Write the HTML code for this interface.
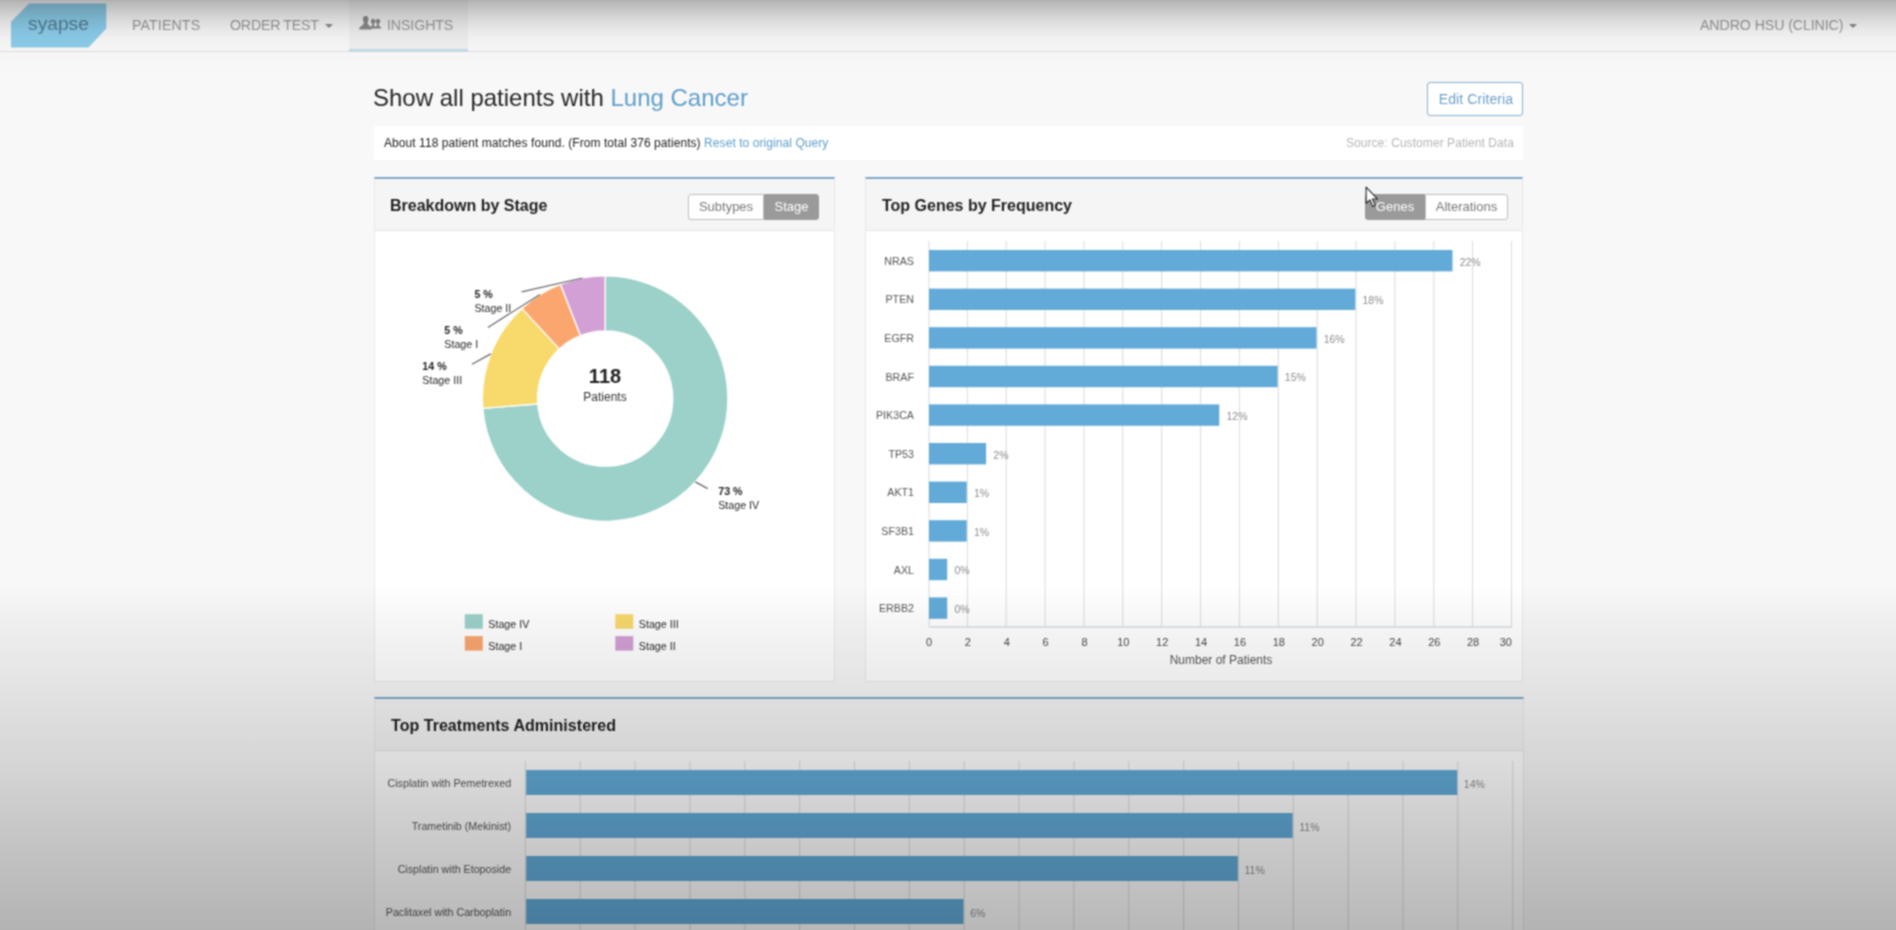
<!DOCTYPE html>
<html lang="en">
<head>
<meta charset="utf-8">
<title>Syapse Insights</title>
<style>
*{box-sizing:border-box;margin:0;padding:0}
html,body{width:1896px;height:930px;overflow:hidden}
body{position:relative;background:#f8f8f8;font-family:"Liberation Sans",Arial,sans-serif;color:#333;-webkit-font-smoothing:antialiased}
.abs{position:absolute}
/* navbar */
#nav{position:absolute;left:0;top:0;width:1896px;height:52px;background:#f8f8f8;border-bottom:1px solid #dedede}
#nav .item{position:absolute;top:0;height:50px;line-height:50px;font-size:14.2px;color:#9a9a9a;white-space:nowrap;letter-spacing:0}
#nav .active{background:#f0f0f0;border-bottom:3px solid #c2dbe6;height:52px}
.caret{display:inline-block;width:0;height:0;border-left:4px solid transparent;border-right:4px solid transparent;border-top:4px solid #8a8a8a;vertical-align:middle;margin-left:6px}
#logo{position:absolute;left:10px;top:3px}
/* heading */
#h1{position:absolute;left:373px;top:82px;font-size:24px;line-height:32px;color:#262626;white-space:nowrap}
#h1 span{color:#5f9ecb}
#edit{position:absolute;left:1427px;top:82px;width:96px;height:34px;border:1px solid #86b0d0;border-radius:3px;background:#fff;color:#6a9fc8;font-size:14px;line-height:32px;text-align:center;letter-spacing:.1px;padding-left:2px}
#info{position:absolute;left:374px;top:126px;width:1149px;height:34px;background:#fff;font-size:12px;letter-spacing:.07px;line-height:34px;color:#222}
#info .l{position:absolute;left:10px;top:0;white-space:nowrap}
#info .l span{color:#5f9ecb}
#info .r{position:absolute;right:9px;top:0;color:#b5b5b5;white-space:nowrap}
/* panels */
.panel{position:absolute;background:#fff;border:1px solid #e9e9e9;border-top:2px solid #7fa8c9}
.panel .hd{position:absolute;left:0;top:0;right:0;height:52px;background:#f5f5f5;border-bottom:1px solid #e6e6e6}
.panel .hd .t{position:absolute;left:15px;top:0;line-height:53px;font-size:16px;font-weight:bold;color:#1f1f1f;white-space:nowrap}
.bg{position:absolute;height:26px;font-size:13px;line-height:24px;text-align:center;border:1px solid #bdbdbd;background:#fff;color:#777}
.bg.on{background:#9a9a9a;border-color:#9a9a9a;color:#fff}
svg text{font-family:"Liberation Sans",Arial,sans-serif}
.cat{font-size:10.7px;fill:#555}
.val{font-size:10.5px;fill:#8c8c8c}
.tick{font-size:11px;fill:#484848}
.axt{font-size:12px;fill:#555}
.dl{font-size:10.7px;fill:#262626}
.dlb{font-size:10.7px;fill:#222;font-weight:bold}
.lg{font-size:10.7px;fill:#262626}
#page{position:absolute;left:0;top:0;width:1896px;height:930px;overflow:hidden;background:#f8f8f8;filter:url(#soft)}
#charts{position:absolute;left:0;top:0;width:1896px;height:930px}
#ovb{position:absolute;left:0;top:560px;width:1896px;height:370px;pointer-events:none;
background:linear-gradient(to bottom,rgba(0,0,0,0) 0,rgba(0,0,0,0) 25px,rgba(0,0,0,.014) 40px,rgba(0,0,0,.034) 60px,rgba(0,0,0,.05) 80px,rgba(0,0,0,.078) 120px,rgba(0,0,0,.109) 160px,rgba(0,0,0,.138) 200px,rgba(0,0,0,.173) 240px,rgba(0,0,0,.206) 280px,rgba(0,0,0,.238) 320px,rgba(0,0,0,.28) 370px)}
#ovt{position:absolute;left:0;top:0;width:1896px;height:80px;pointer-events:none;
background:linear-gradient(to bottom,rgba(0,0,0,.31) 0,rgba(0,0,0,.265) 1.5px,rgba(0,0,0,.195) 10px,rgba(0,0,0,.12) 20px,rgba(0,0,0,.062) 30px,rgba(0,0,0,.028) 40px,rgba(0,0,0,.012) 50px,rgba(0,0,0,.005) 65px,rgba(0,0,0,0) 80px)}
</style>
</head>
<body>
<svg width="0" height="0" style="position:absolute"><defs><filter id="soft" x="0" y="0" width="100%" height="100%" color-interpolation-filters="sRGB"><feConvolveMatrix order="3" kernelMatrix="1 2 1 2 4 2 1 2 1" divisor="16" edgeMode="duplicate"/></filter></defs></svg>
<div id="page">
<div id="nav">
  <svg id="logo" width="98" height="46" viewBox="0 0 98 46"><polygon points="19,0.500 96.300,0.500 96.300,25.500 78.500,44.500 1,44.500 1,18.800" fill="#8ccdea"/><text x="48.500" y="26.800" text-anchor="middle" font-size="19.200" fill="#527d94">syapse</text></svg>
  <div class="item" style="left:132px;letter-spacing:.12px">PATIENTS</div>
  <div class="item" style="left:230px;letter-spacing:-.2px;word-spacing:-.5px">ORDER TEST<span class="caret"></span></div>
  <div class="item active" style="left:349px;width:119px"><span style="position:absolute;left:38px;letter-spacing:-.1px">INSIGHTS</span>
    <svg style="position:absolute;left:10px;top:16px" width="24" height="15" viewBox="0 0 24 15"><g fill="#8a8a8a"><ellipse cx="6.700" cy="2.900" rx="2.800" ry="3"/><path d="M0.200 13.500C0.200 10.500 3.300 9.700 4.700 8L4.700 5L8.700 5L8.700 8C10.100 9.700 12.900 10.500 12.900 13.500Z"/><ellipse cx="14.100" cy="5.300" rx="2.300" ry="2.500"/><path d="M11.200 12.600C11.200 10.900 12.600 10.300 13.200 9.300L13.200 7L15 7L15 9.300C15.600 10.300 17.400 10.900 17.400 12.600Z"/><ellipse cx="18.900" cy="5.300" rx="2.300" ry="2.500"/><path d="M15.800 12.600C15.800 10.900 17.400 10.300 18 9.300L18 7L19.800 7L19.800 9.300C20.400 10.300 22.400 10.900 22.400 12.600Z"/></g></svg>
  </div>
  <div class="item" style="left:1700px;letter-spacing:-.09px">ANDRO HSU (CLINIC)<span class="caret"></span></div>
</div>

<div id="h1">Show all patients with <span>Lung Cancer</span></div>
<div id="edit">Edit Criteria</div>
<div id="info"><div class="l">About 118 patient matches found. (From total 376 patients) <span>Reset to original Query</span></div><div class="r">Source: Customer Patient Data</div></div>

<div class="panel" style="left:374px;top:177px;width:461px;height:505px">
  <div class="hd"><div class="t">Breakdown by Stage</div>
    <div class="bg" style="left:313px;top:15px;width:76px;border-radius:3px 0 0 3px">Subtypes</div>
    <div class="bg on" style="left:389px;top:15px;width:55px;border-radius:0 3px 3px 0">Stage</div>
  </div>
</div>
<div class="panel" style="left:865px;top:177px;width:658px;height:505px">
  <div class="hd"><div class="t" style="left:16px">Top Genes by Frequency</div>
    <div class="bg on" style="left:499px;top:15px;width:60px;border-radius:3px 0 0 3px">Genes</div>
    <div class="bg" style="left:559px;top:15px;width:83px;border-radius:0 3px 3px 0">Alterations</div>
  </div>
</div>
<div class="panel" style="left:374px;top:697px;width:1150px;height:260px">
  <div class="hd"><div class="t" style="left:16px;letter-spacing:.04px">Top Treatments Administered</div></div>
</div>

<svg id="charts" width="1896" height="930" viewBox="0 0 1896 930">
<g id="donut">
<path d="M605.15 275.85A122.75 122.75 0 1 1 482.79 408.39L537.77 403.99A67.6 67.6 0 1 0 605.15 331.00Z" fill="#9bd1c9" stroke="#fff" stroke-width="1.3"/>
<path d="M482.79 408.39A122.75 122.75 0 0 1 521.89 308.41L559.30 348.93A67.6 67.6 0 0 0 537.77 403.99Z" fill="#f8d96c" stroke="#fff" stroke-width="1.3"/>
<path d="M521.89 308.41A122.75 122.75 0 0 1 560.45 284.28L580.53 335.64A67.6 67.6 0 0 0 559.30 348.93Z" fill="#fba66f" stroke="#fff" stroke-width="1.3"/>
<path d="M560.45 284.28A122.75 122.75 0 0 1 605.15 275.85L605.15 331.00A67.6 67.6 0 0 0 580.53 335.64Z" fill="#d3a0d5" stroke="#fff" stroke-width="1.3"/>
<line x1="695.3" y1="481.9" x2="707.7" y2="488.6" stroke="#666" stroke-width="1.2"/>
<text x="718.2" y="494.7" class="dlb">73 %</text>
<text x="718.2" y="508.9" class="dl">Stage IV</text>
<line x1="490.8" y1="353.9" x2="472.0" y2="364.2" stroke="#666" stroke-width="1.2"/>
<text x="422.3" y="369.6" class="dlb">14 %</text>
<text x="422.3" y="383.8" class="dl">Stage III</text>
<line x1="540.0" y1="294.5" x2="487.9" y2="327.4" stroke="#666" stroke-width="1.2"/>
<text x="444.3" y="333.5" class="dlb">5 %</text>
<text x="444.3" y="347.7" class="dl">Stage I</text>
<line x1="582.4" y1="278.0" x2="521.6" y2="291.9" stroke="#666" stroke-width="1.2"/>
<text x="474.4" y="297.9" class="dlb">5 %</text>
<text x="474.4" y="312.1" class="dl">Stage II</text>
<rect x="464.8" y="614.2" width="18" height="14.5" fill="#9bd1c9"/>
<text x="488.3" y="627.6" class="lg">Stage IV</text>
<rect x="615.3" y="614.2" width="18" height="14.5" fill="#f8d96c"/>
<text x="638.8" y="627.6" class="lg">Stage III</text>
<rect x="464.8" y="636.1" width="18" height="14.5" fill="#fba66f"/>
<text x="488.3" y="649.5" class="lg">Stage I</text>
<rect x="615.3" y="636.1" width="18" height="14.5" fill="#d3a0d5"/>
<text x="638.8" y="649.5" class="lg">Stage II</text>
<text x="605" y="383" text-anchor="middle" font-size="20" font-weight="bold" fill="#222">118</text>
<text x="605" y="401" text-anchor="middle" font-size="12" fill="#333">Patients</text>
</g>
<g id="genes">
<line x1="929.0" y1="241.0" x2="929.0" y2="627.0" stroke="#dadada" stroke-width="1"/>
<line x1="967.4" y1="241.0" x2="967.4" y2="627.0" stroke="#dadada" stroke-width="1"/>
<line x1="1006.2" y1="241.0" x2="1006.2" y2="627.0" stroke="#dadada" stroke-width="1"/>
<line x1="1045.1" y1="241.0" x2="1045.1" y2="627.0" stroke="#dadada" stroke-width="1"/>
<line x1="1084.0" y1="241.0" x2="1084.0" y2="627.0" stroke="#dadada" stroke-width="1"/>
<line x1="1122.8" y1="241.0" x2="1122.8" y2="627.0" stroke="#dadada" stroke-width="1"/>
<line x1="1161.7" y1="241.0" x2="1161.7" y2="627.0" stroke="#dadada" stroke-width="1"/>
<line x1="1200.6" y1="241.0" x2="1200.6" y2="627.0" stroke="#dadada" stroke-width="1"/>
<line x1="1239.4" y1="241.0" x2="1239.4" y2="627.0" stroke="#dadada" stroke-width="1"/>
<line x1="1278.3" y1="241.0" x2="1278.3" y2="627.0" stroke="#dadada" stroke-width="1"/>
<line x1="1317.2" y1="241.0" x2="1317.2" y2="627.0" stroke="#dadada" stroke-width="1"/>
<line x1="1356.0" y1="241.0" x2="1356.0" y2="627.0" stroke="#dadada" stroke-width="1"/>
<line x1="1394.9" y1="241.0" x2="1394.9" y2="627.0" stroke="#dadada" stroke-width="1"/>
<line x1="1433.8" y1="241.0" x2="1433.8" y2="627.0" stroke="#dadada" stroke-width="1"/>
<line x1="1472.6" y1="241.0" x2="1472.6" y2="627.0" stroke="#dadada" stroke-width="1"/>
<line x1="1511.5" y1="241.0" x2="1511.5" y2="627.0" stroke="#dadada" stroke-width="1"/>
<line x1="929.0" y1="627.0" x2="1512.0" y2="627.0" stroke="#d5dde6" stroke-width="1.5"/>
<rect x="929.0" y="250.0" width="523.5" height="21.4" fill="#62abd8"/>
<text x="914.0" y="264.8" text-anchor="end" class="cat">NRAS</text>
<text x="1459.7" y="265.5" class="val">22%</text>
<rect x="929.0" y="288.6" width="426.3" height="21.4" fill="#62abd8"/>
<text x="914.0" y="303.4" text-anchor="end" class="cat">PTEN</text>
<text x="1362.5" y="304.1" class="val">18%</text>
<rect x="929.0" y="327.2" width="387.5" height="21.4" fill="#62abd8"/>
<text x="914.0" y="342.0" text-anchor="end" class="cat">EGFR</text>
<text x="1323.7" y="342.7" class="val">16%</text>
<rect x="929.0" y="365.8" width="348.6" height="21.4" fill="#62abd8"/>
<text x="914.0" y="380.6" text-anchor="end" class="cat">BRAF</text>
<text x="1284.8" y="381.3" class="val">15%</text>
<rect x="929.0" y="404.4" width="290.3" height="21.4" fill="#62abd8"/>
<text x="914.0" y="419.2" text-anchor="end" class="cat">PIK3CA</text>
<text x="1226.5" y="419.9" class="val">12%</text>
<rect x="929.0" y="443.0" width="57.1" height="21.4" fill="#62abd8"/>
<text x="914.0" y="457.8" text-anchor="end" class="cat">TP53</text>
<text x="993.3" y="458.5" class="val">2%</text>
<rect x="929.0" y="481.6" width="37.7" height="21.4" fill="#62abd8"/>
<text x="914.0" y="496.4" text-anchor="end" class="cat">AKT1</text>
<text x="973.9" y="497.1" class="val">1%</text>
<rect x="929.0" y="520.2" width="37.7" height="21.4" fill="#62abd8"/>
<text x="914.0" y="535.0" text-anchor="end" class="cat">SF3B1</text>
<text x="973.9" y="535.7" class="val">1%</text>
<rect x="929.0" y="558.8" width="18.2" height="21.4" fill="#62abd8"/>
<text x="914.0" y="573.6" text-anchor="end" class="cat">AXL</text>
<text x="954.4" y="574.3" class="val">0%</text>
<rect x="929.0" y="597.4" width="18.2" height="21.4" fill="#62abd8"/>
<text x="914.0" y="612.2" text-anchor="end" class="cat">ERBB2</text>
<text x="954.4" y="612.9" class="val">0%</text>
<text x="929.0" y="646" text-anchor="middle" class="tick">0</text>
<text x="967.9" y="646" text-anchor="middle" class="tick">2</text>
<text x="1006.7" y="646" text-anchor="middle" class="tick">4</text>
<text x="1045.6" y="646" text-anchor="middle" class="tick">6</text>
<text x="1084.5" y="646" text-anchor="middle" class="tick">8</text>
<text x="1123.3" y="646" text-anchor="middle" class="tick">10</text>
<text x="1162.2" y="646" text-anchor="middle" class="tick">12</text>
<text x="1201.1" y="646" text-anchor="middle" class="tick">14</text>
<text x="1239.9" y="646" text-anchor="middle" class="tick">16</text>
<text x="1278.8" y="646" text-anchor="middle" class="tick">18</text>
<text x="1317.7" y="646" text-anchor="middle" class="tick">20</text>
<text x="1356.5" y="646" text-anchor="middle" class="tick">22</text>
<text x="1395.4" y="646" text-anchor="middle" class="tick">24</text>
<text x="1434.3" y="646" text-anchor="middle" class="tick">26</text>
<text x="1473.1" y="646" text-anchor="middle" class="tick">28</text>
<text x="1512.0" y="646" text-anchor="end" class="tick">30</text>
<text x="1221" y="664" text-anchor="middle" class="axt">Number of Patients</text>
</g>
<g id="treat">
<line x1="525.4" y1="761.0" x2="525.4" y2="930" stroke="#dddddd" stroke-width="1"/>
<line x1="580.2" y1="761.0" x2="580.2" y2="930" stroke="#dddddd" stroke-width="1"/>
<line x1="635.1" y1="761.0" x2="635.1" y2="930" stroke="#dddddd" stroke-width="1"/>
<line x1="690.0" y1="761.0" x2="690.0" y2="930" stroke="#dddddd" stroke-width="1"/>
<line x1="744.8" y1="761.0" x2="744.8" y2="930" stroke="#dddddd" stroke-width="1"/>
<line x1="799.6" y1="761.0" x2="799.6" y2="930" stroke="#dddddd" stroke-width="1"/>
<line x1="854.5" y1="761.0" x2="854.5" y2="930" stroke="#dddddd" stroke-width="1"/>
<line x1="909.3" y1="761.0" x2="909.3" y2="930" stroke="#dddddd" stroke-width="1"/>
<line x1="964.2" y1="761.0" x2="964.2" y2="930" stroke="#dddddd" stroke-width="1"/>
<line x1="1019.0" y1="761.0" x2="1019.0" y2="930" stroke="#dddddd" stroke-width="1"/>
<line x1="1073.9" y1="761.0" x2="1073.9" y2="930" stroke="#dddddd" stroke-width="1"/>
<line x1="1128.8" y1="761.0" x2="1128.8" y2="930" stroke="#dddddd" stroke-width="1"/>
<line x1="1183.6" y1="761.0" x2="1183.6" y2="930" stroke="#dddddd" stroke-width="1"/>
<line x1="1238.5" y1="761.0" x2="1238.5" y2="930" stroke="#dddddd" stroke-width="1"/>
<line x1="1293.3" y1="761.0" x2="1293.3" y2="930" stroke="#dddddd" stroke-width="1"/>
<line x1="1348.2" y1="761.0" x2="1348.2" y2="930" stroke="#dddddd" stroke-width="1"/>
<line x1="1403.0" y1="761.0" x2="1403.0" y2="930" stroke="#dddddd" stroke-width="1"/>
<line x1="1457.8" y1="761.0" x2="1457.8" y2="930" stroke="#dddddd" stroke-width="1"/>
<line x1="1512.7" y1="761.0" x2="1512.7" y2="930" stroke="#dddddd" stroke-width="1"/>
<rect x="526.1999999999999" y="770.0" width="931.0" height="25" fill="#62abd8"/>
<text x="511.09999999999997" y="786.5" text-anchor="end" class="cat">Cisplatin with Pemetrexed</text>
<text x="1463.8" y="787.5" class="val">14%</text>
<rect x="526.1999999999999" y="813.0" width="766.4" height="25" fill="#62abd8"/>
<text x="511.09999999999997" y="829.5" text-anchor="end" class="cat">Trametinib (Mekinist)</text>
<text x="1299.3" y="830.5" class="val">11%</text>
<rect x="526.1999999999999" y="856.0" width="711.6" height="25" fill="#62abd8"/>
<text x="511.09999999999997" y="872.5" text-anchor="end" class="cat">Cisplatin with Etoposide</text>
<text x="1244.5" y="873.5" class="val">11%</text>
<rect x="526.1999999999999" y="899.0" width="437.3" height="25" fill="#62abd8"/>
<text x="511.09999999999997" y="915.5" text-anchor="end" class="cat">Paclitaxel with Carboplatin</text>
<text x="970.2" y="916.5" class="val">6%</text>
</g>
</svg>

<svg class="abs" style="left:1364.300px;top:185px" width="17" height="25.500" viewBox="0 0 20 30"><path d="M2.500 2.500L2.500 21.500L7 17.500L10.300 25.200L13.200 24L9.900 16.400L15.800 16.400Z" fill="#fff" stroke="#222" stroke-width="1.300" stroke-linejoin="round"/></svg>
<div id="ovt"></div>
<div id="ovb"></div>
</div>
</body>
</html>
